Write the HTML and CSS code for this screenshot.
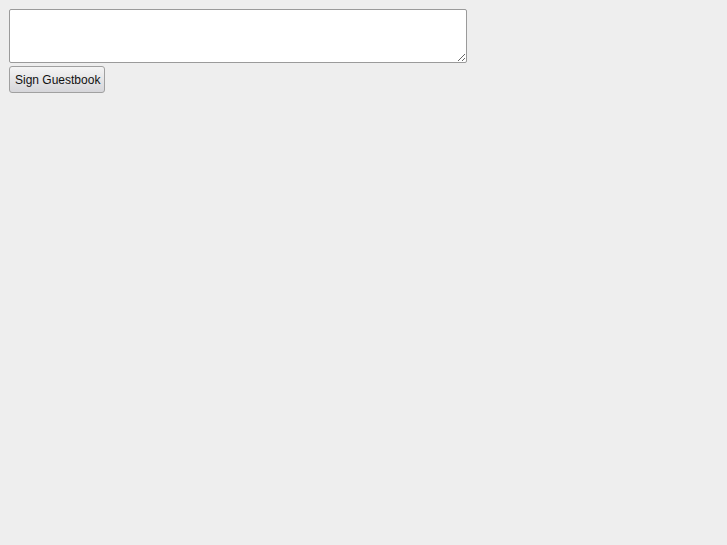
FILE: index.html
```html
<!DOCTYPE html>
<html>
<head>
<meta charset="utf-8">
<link rel="stylesheet" href="styles.css">
</head>
<body>
<form class="guestbook">
  <textarea class="entry"></textarea>
  <button type="button" class="sign">Sign Guestbook</button>
</form>
</body>
</html>
```

FILE: styles.css
```css
html, body {
  background: #eeeeee;
}
body {
  margin: 0;
  padding: 9px;
  font-family: "Liberation Sans", Arial, sans-serif;
}
.guestbook {
  display: flex;
  flex-direction: column;
  align-items: flex-start;
  gap: 3px;
}
.entry {
  box-sizing: border-box;
  width: 458px;
  height: 54px;
  margin: 0;
  border: 1px solid #9a9a9a;
  border-radius: 2px;
  background: #ffffff;
  resize: both;
}
.sign {
  box-sizing: border-box;
  height: 27px;
  width: 96px;
  margin: 0;
  padding: 0 5px;
  border: 1px solid #a0a0a0;
  border-radius: 3px;
  background: linear-gradient(#f4f4f4, #d6d6da);
  color: #111;
  font-family: "Liberation Sans", Arial, sans-serif;
  font-size: 12px;
  white-space: nowrap;
}
```
